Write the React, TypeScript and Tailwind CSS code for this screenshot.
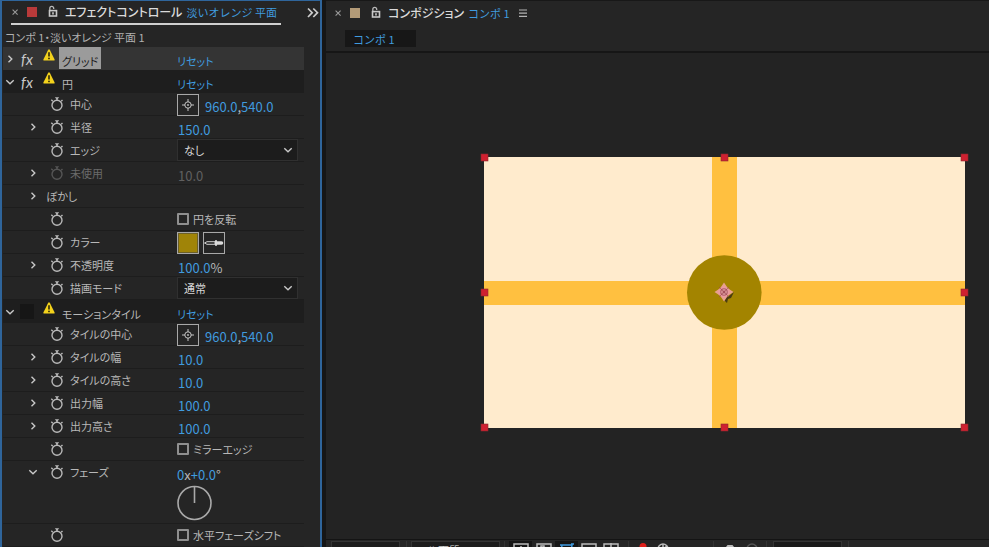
import { useState } from 'react';
import type { ReactNode } from 'react';

interface PropertyRowProps {
  label?: string;
  caret?: 'right' | 'down';
  stopwatch?: boolean;
  disabled?: boolean;
  tall?: boolean;
  children?: ReactNode;
}

interface EffectHeaderProps {
  name: string;
  open?: boolean;
  selected?: boolean;
  enabled?: boolean;
}

function Caret({ direction }: { direction: 'right' | 'down' }) {
  return (
    <svg className="size-3" viewBox="0 0 12 12" fill="none" stroke="#c8c8c8" strokeWidth="1.400">
      {direction === 'right' ? <path d="M4.500 2.800 7.800 6 4.500 9.200" /> : <path d="M2.300 4.300 6 7.800 9.700 4.300" />}
    </svg>
  );
}

function Stopwatch() {
  return (
    <svg className="h-4 w-3.5" viewBox="0 0 14 16" fill="none" stroke="currentColor" strokeWidth="1.400">
      <circle cx="7" cy="9.200" r="5" />
      <path d="M7 4.200V2.600M2.800 5.200 1.300 3.800M11.200 5.200l1.300-1.300" />
      <path d="M4.800 1.200h4.400L7 3.800z" fill="currentColor" stroke="none" />
    </svg>
  );
}

function Warning() {
  return (
    <svg className="h-3 w-3" viewBox="0 0 12 12">
      <path d="M5.200.8Q6-.3 6.800.8L11.600 10.600q.2.900-.7.900H1.100q-.900 0-.7-.9z" fill="#f3d21c" />
      <path d="M6 3.300v4.200" stroke="#2c2608" strokeWidth="1.600" />
      <circle cx="6" cy="9.400" r=".9" fill="#2c2608" />
    </svg>
  );
}

function Lock() {
  return (
    <svg className="h-3.5 w-3" viewBox="0 0 12 14" fill="none">
      <path d="M2.800 6V3.400Q2.800 1.400 4.700 1.400t2 2V4" stroke="#b9b9b9" strokeWidth="1.300" />
      <rect x="2.500" y="5.600" width="7" height="5.400" stroke="#c8c8c8" strokeWidth="1.600" />
      <path d="M6 7.200v2.400" stroke="#c8c8c8" strokeWidth="1.600" />
    </svg>
  );
}

function Cross() {
  return (
    <svg className="size-2" viewBox="0 0 8 8" stroke="#9a9a9a" strokeWidth="1.100">
      <path d="m1.600 1.600 5 5m0-5-5 5" />
    </svg>
  );
}

function Eyedropper() {
  return (
    <svg className="h-3 w-5" viewBox="0 0 20 12">
      <path d="M.5 6 3 4.700h8v2.600H3z" fill="none" stroke="#cfcfcf" strokeWidth="1" />
      <path d="M11 3.200h2v1h4.500q1.800.3 1.800 1.800t-1.800 1.800H13v1h-2z" fill="#dadada" />
    </svg>
  );
}

function HotText({ children, disabled }: { children: ReactNode; disabled?: boolean }) {
  return (
    <button type="button" disabled={disabled} className="text-[13px] leading-4 text-[#409bdf] disabled:text-[#606060]">
      {children}
    </button>
  );
}

function PropertyRow({ label, caret, stopwatch = true, disabled, tall, children }: PropertyRowProps) {
  return (
    <div className={`flex border-b border-[#1d1d1d] ${tall ? 'h-[63px]' : 'h-[23px]'}`}>
      <div className="flex h-[22px] w-[174px] shrink-0 items-center pl-6">
        <button type="button" aria-label="開閉" className="w-3">
          {caret && <Caret direction={caret} />}
        </button>
        {stopwatch && (
          <button type="button" aria-label="ストップウォッチ" className={`ml-[11px] ${disabled ? 'text-[#555555]' : 'text-[#b8b8b8]'}`}>
            <Stopwatch />
          </button>
        )}
        <span className={`leading-4 ${stopwatch ? 'ml-1.5' : 'ml-[7px]'} ${disabled ? 'text-[#6a6a6a]' : 'text-[#b8b8b8]'}`}>
          {label}
        </span>
      </div>
      {children}
    </div>
  );
}

function EffectHeader({ name, open = true, selected, enabled = true }: EffectHeaderProps) {
  return (
    <div className={`flex h-[23px] pl-px ${selected ? 'bg-[#343434]' : 'bg-[#1e1e1e]'}`}>
      <button type="button" aria-label="開閉" className="flex h-[23px] w-3 items-center">
        <Caret direction={open ? 'down' : 'right'} />
      </button>
      <button type="button" aria-label="エフェクト" className={`mt-1 ml-1 h-[15px] w-[14px] font-[Lato] text-[15px] leading-[14px] text-[#c9c9c9] italic ${enabled ? '' : 'bg-[#161616]'}`}>
        {enabled && 'fx'}
      </button>
      <span className="mt-0.5 ml-[9px]">
        <Warning />
      </span>
      <div className="w-[122px] shrink-0 pl-1">
        <span className={`flex h-[22px] w-fit items-end px-[3px] leading-4 ${selected ? 'bg-[#9b9b9b] text-[#1c1c1c]' : 'text-[#b8b8b8]'}`}>
          {name}
        </span>
      </div>
      <button type="button" className="mt-1.5 h-4 leading-4 text-[#409bdf]">
        リセット
      </button>
    </div>
  );
}

function PointControl() {
  return (
    <div className="flex gap-1.5">
      <button type="button" aria-label="位置を指定" className="mt-px flex size-[22px] items-center justify-center border border-[#a8a8a8] text-[#c4c4c4]">
        <svg className="size-3" viewBox="0 0 12 12" fill="none" stroke="currentColor">
          <circle cx="6" cy="6" r="3.200" />
          <path d="M6 0v3M6 9v3M0 6h3M9 6h3" />
          <circle cx="6" cy="6" r=".9" fill="currentColor" stroke="none" />
        </svg>
      </button>
      <span className="mt-1.5 flex">
        <HotText>960.0</HotText>
        <span className="text-[13px] leading-4 text-[#b8b8b8]">,</span>
        <HotText>540.0</HotText>
      </span>
    </div>
  );
}

function NumberControl({ value, unit, disabled }: { value: string; unit?: string; disabled?: boolean }) {
  return (
    <span className="mt-1.5 ml-px flex">
      <HotText disabled={disabled}>{value}</HotText>
      {unit && <span className="text-[13px] leading-4 text-[#b8b8b8]">{unit}</span>}
    </span>
  );
}

function SelectControl({ label, options }: { label: string; options: string[] }) {
  return (
    <div className="relative h-[22px] w-[121px]">
      <select aria-label={label} className="h-full w-full appearance-none border border-[#303030] bg-[#1c1c1c] pl-1.5 text-[11px] text-[#d8d8d8]">
        {options.map((option) => (
          <option key={option}>{option}</option>
        ))}
      </select>
      <span className="pointer-events-none absolute top-[5px] right-1">
        <Caret direction="down" />
      </span>
    </div>
  );
}

function CheckControl({ label }: { label: string }) {
  const [checked, setChecked] = useState(false);

  return (
    <label className="flex h-[22px] items-center gap-1 leading-4 text-[#b8b8b8]">
      <input
        type="checkbox"
        checked={checked}
        onChange={(e) => setChecked(e.target.checked)}
        className="size-3 appearance-none rounded-[1px] border-2 border-[#8f8f8f] checked:bg-[#409bdf]"
      />
      {label}
    </label>
  );
}

function EffectControls() {
  return (
    <section className="w-[322px] shrink-0 border-x-2 border-t border-[#2f659b] bg-[#252525] pl-px">
      <header className="flex h-[26px] items-start">
        <div className="ml-2 flex h-6 w-[270px] shrink-0 items-center border-b-2 border-[#d0d0d0]">
          <button type="button" aria-label="閉じる">
            <Cross />
          </button>
          <span className="ml-2 size-2.5 bg-[#b93a3a]" />
          <button type="button" aria-label="ロック" className="ml-2.5">
            <Lock />
          </button>
          <h2 className="ml-1.5 flex gap-1 text-[12px] leading-4 font-medium whitespace-nowrap text-[#dadada]">
            エフェクトコントロール
            <span className="text-[11px] font-normal text-[#409bdf] [font-feature-settings:normal]">淡いオレンジ 平面</span>
          </h2>
        </div>
        <button type="button" aria-label="その他のパネル" className="mt-1.5 ml-[26px]">
          <svg className="size-3" viewBox="0 0 12 12" fill="none" stroke="#cccccc" strokeWidth="1.700">
            <path d="m1 1.500 4.200 4.200L1 10M6.300 1.500l4.200 4.200L6.300 10" />
          </svg>
        </button>
      </header>
      <p className="h-5 pt-0.5 pl-0.5 leading-4 text-[#b0b0b0]">コンポ 1・淡いオレンジ 平面 1</p>

      <div className="mr-4">
        <EffectHeader name="グリッド" open={false} selected />
        <EffectHeader name="円" />
        <PropertyRow label="中心">
          <PointControl />
        </PropertyRow>
        <PropertyRow label="半径" caret="right">
          <NumberControl value="150.0" />
        </PropertyRow>
        <PropertyRow label="エッジ">
          <SelectControl label="エッジ" options={['なし']} />
        </PropertyRow>
        <PropertyRow label="未使用" caret="right" disabled>
          <NumberControl value="10.0" disabled />
        </PropertyRow>
        <PropertyRow label="ぼかし" caret="right" stopwatch={false} />
        <PropertyRow>
          <CheckControl label="円を反転" />
        </PropertyRow>
        <PropertyRow label="カラー">
          <div className="flex gap-1">
            <input type="button" aria-label="カラー" className="mt-px size-[22px] border border-[#a8a8a8] bg-[#a08408] ring-1 ring-[#6b5f28] ring-inset" />
            <button type="button" aria-label="スポイト" className="mt-px flex size-[22px] items-center justify-center border border-[#a8a8a8]">
              <Eyedropper />
            </button>
          </div>
        </PropertyRow>
        <PropertyRow label="不透明度" caret="right">
          <NumberControl value="100.0" unit="%" />
        </PropertyRow>
        <PropertyRow label="描画モード">
          <SelectControl label="描画モード" options={['通常']} />
        </PropertyRow>

        <EffectHeader name="モーションタイル" enabled={false} />
        <PropertyRow label="タイルの中心">
          <PointControl />
        </PropertyRow>
        <PropertyRow label="タイルの幅" caret="right">
          <NumberControl value="10.0" />
        </PropertyRow>
        <PropertyRow label="タイルの高さ" caret="right">
          <NumberControl value="10.0" />
        </PropertyRow>
        <PropertyRow label="出力幅" caret="right">
          <NumberControl value="100.0" />
        </PropertyRow>
        <PropertyRow label="出力高さ" caret="right">
          <NumberControl value="100.0" />
        </PropertyRow>
        <PropertyRow>
          <CheckControl label="ミラーエッジ" />
        </PropertyRow>
        <PropertyRow label="フェーズ" caret="down" tall>
          <div>
            <span className="mt-1.5 flex">
              <HotText>0</HotText>
              <span className="text-[13px] leading-4 text-[#b8b8b8]">x</span>
              <HotText>+0.0</HotText>
              <span className="text-[13px] leading-4 text-[#b8b8b8]">°</span>
            </span>
            <svg className="mt-0.5 size-9" viewBox="0 0 36 36" fill="none" stroke="#a9a9a9" strokeWidth="1.600">
              <circle cx="17.500" cy="18" r="16.500" />
              <path d="M17.500 2v16" />
            </svg>
          </div>
        </PropertyRow>
        <PropertyRow>
          <CheckControl label="水平フェーズシフト" />
        </PropertyRow>
      </div>
    </section>
  );
}

const HANDLES = [
  [0, 0], [240, 0], [480, 0],
  [0, 135], [480, 135],
  [0, 270], [240, 270], [480, 270],
];

function Artwork() {
  return (
    <svg className="block h-[280px] w-[490px]" viewBox="-5 -5 490 280">
      <rect width="481" height="271" fill="#ffebcd" />
      <path d="M228 0h25v271h-25z" fill="#ffc040" />
      <path d="M0 124h481v24H0z" fill="#ffc040" />
      <circle cx="240.300" cy="135.500" r="37.300" fill="#a38400" />
      <path d="m238 141 7-2 5-4-3 6-3 1-1 4-3-3z" fill="#493c12" />
      <path d="m240 125.500 3 4.500h-6zM240 144.500l3-4.500h-6zM230.500 135l4.500-3v6zM249.500 135l-4.500-3v6z" fill="#e8a08c" />
      <circle cx="240" cy="135" r="4.800" fill="#b0606a" stroke="#e99aa0" strokeWidth="2" />
      <circle cx="240" cy="135" r="2.200" fill="none" stroke="#efb0b0" />
      <path d="M235 130l10 10M245 130l-10 10" stroke="#9c4650" strokeWidth=".6" />
      {HANDLES.map(([x, y]) => (
        <rect key={`${x}-${y}`} x={x - 3} y={y - 3} width="7" height="7" fill="#cf2030" stroke="#8c2a30" strokeWidth=".6" />
      ))}
    </svg>
  );
}

function ViewerToolbar() {
  return (
    <footer className="flex h-6 items-start border-t border-[#141414] bg-[#252525] pt-px pl-[5px] whitespace-nowrap">
      <select aria-label="拡大率" className="h-5 w-[69px] appearance-none border border-[#343434] bg-[#1c1c1c]" />
      <span className="ml-1.5 h-5 w-px bg-[#333333]" />
      <select aria-label="解像度" className="ml-1 h-5 w-[89px] appearance-none border border-[#343434] bg-[#1c1c1c] pb-1 pl-1 text-[11px] text-[#d0d0d0] [font-feature-settings:normal]">
        <option>フル画質</option>
      </select>
      <span className="ml-1 h-5 w-px bg-[#333333]" />
      <div className="ml-1 flex text-[#bcbcbc]">
        <button type="button" aria-label="高速プレビュー" className="flex h-5 w-[23px] justify-center bg-[#161616] pt-0.5">
          <svg className="h-3 w-4" viewBox="0 0 16 12" fill="none" stroke="currentColor" strokeWidth="1.500">
            <path d="M1 1h14v10H1zM8 3v6" />
          </svg>
        </button>
        <button type="button" aria-label="透明グリッド" className="flex h-5 w-[23px] justify-center pt-0.5">
          <svg className="h-3 w-4" viewBox="0 0 16 12" fill="none" stroke="currentColor" strokeWidth="1.500">
            <path d="M1 1h14v10H1zM5 3h3v3H5zM8 6h3v3H8z" />
          </svg>
        </button>
        <button type="button" aria-label="マスクの表示" className="flex h-5 w-[23px] justify-center bg-[#161616] pt-0.5 text-[#409bdf]">
          <svg className="h-3 w-4" viewBox="0 0 16 12" fill="none" stroke="currentColor" strokeWidth="1.500">
            <path d="M3 2h10L12 10H2zM1 2h3M12 1h3" />
          </svg>
        </button>
        <button type="button" aria-label="目標範囲" className="flex h-5 w-[22px] justify-center pt-0.5">
          <svg className="h-3 w-4" viewBox="0 0 16 12" fill="none" stroke="currentColor" strokeWidth="1.500">
            <path d="M1 1h14v10H1z" />
          </svg>
        </button>
        <button type="button" aria-label="ガイド" className="flex h-5 w-[22px] justify-center pt-0.5">
          <svg className="h-3 w-4" viewBox="0 0 16 12" fill="none" stroke="currentColor" strokeWidth="1.500">
            <path d="M1 1h14v10H1zM8 0v4" />
          </svg>
        </button>
      </div>
      <span className="ml-1.5 h-5 w-px bg-[#333333]" />
      <button type="button" aria-label="チャンネル" className="mt-0.5 ml-2">
        <svg className="size-3" viewBox="0 0 12 12">
          <circle cx="6" cy="3.500" r="3.500" fill="#e0201c" />
          <circle cx="3.500" cy="8" r="3.500" fill="#2ca04a" />
          <circle cx="8.500" cy="8" r="3.500" fill="#3566d8" />
        </svg>
      </button>
      <button type="button" aria-label="露出" className="mt-0.5 ml-2">
        <svg className="size-3" viewBox="0 0 12 12" fill="none" stroke="#bcbcbc" strokeWidth="1.500">
          <circle cx="6" cy="6" r="5" />
          <path d="M6 1v5l4-3" />
        </svg>
      </button>
      <span className="ml-11 h-5 w-px bg-[#333333]" />
      <button type="button" aria-label="スナップショット" className="mt-1 ml-2">
        <svg className="h-3 w-4" viewBox="0 0 16 12" fill="#bcbcbc">
          <path d="M1 2h3l1.500-2h5L12 2h3v10H1z" />
        </svg>
      </button>
      <button type="button" aria-label="スナップショットを表示" className="mt-0.5 ml-2">
        <svg className="size-3" viewBox="0 0 12 12" fill="none" stroke="#555555" strokeWidth="1.500">
          <circle cx="6" cy="6" r="5" />
        </svg>
      </button>
      <span className="ml-2 h-5 w-px bg-[#333333]" />
      <select aria-label="時間" className="ml-1.5 h-5 w-[69px] appearance-none border border-[#343434] bg-[#1a1a1a]" />
      <span className="ml-1.5 h-5 w-px bg-[#333333]" />
    </footer>
  );
}

function Composition() {
  return (
    <section className="min-w-0 flex-1 border-t border-[#181818] bg-[#252525]">
      <header className="flex h-[29px] items-center pb-1.5 pl-2">
        <button type="button" aria-label="閉じる">
          <Cross />
        </button>
        <span className="ml-2 size-2.5 bg-[#b39b78]" />
        <button type="button" aria-label="ロック" className="ml-2.5">
          <Lock />
        </button>
        <h2 className="ml-1.5 flex gap-1 text-[12px] leading-4 font-medium whitespace-nowrap text-[#dadada]">
          コンポジション
          <span className="text-[11px] font-normal text-[#409bdf] [font-feature-settings:normal]">コンポ 1</span>
        </h2>
        <button type="button" aria-label="パネルメニュー" className="ml-2">
          <svg className="h-3 w-2.5" viewBox="0 0 10 12" stroke="#b4b4b4" strokeWidth="1.200">
            <path d="M1 3h8M1 6.200h8M1 9.400h8" />
          </svg>
        </button>
      </header>
      <nav className="h-[21px] pl-[19px]">
        <button type="button" className="h-[17px] w-[71px] bg-[#171717] pl-2 text-left leading-4 text-[#409bdf] [font-feature-settings:normal]">
          コンポ 1
        </button>
      </nav>
      <div className="overflow-hidden border-t-2 border-[#161616] bg-[#232323] pt-[99px] pb-[107px] pl-[153px]">
        <Artwork />
      </div>
      <ViewerToolbar />
    </section>
  );
}

function App() {
  return (
    <main className="flex h-screen gap-1 overflow-hidden bg-[#161616] font-['Noto_Sans_CJK_JP',sans-serif] text-[11px] [font-feature-settings:'palt']">
      <EffectControls />
      <Composition />
    </main>
  );
}

export default App;
